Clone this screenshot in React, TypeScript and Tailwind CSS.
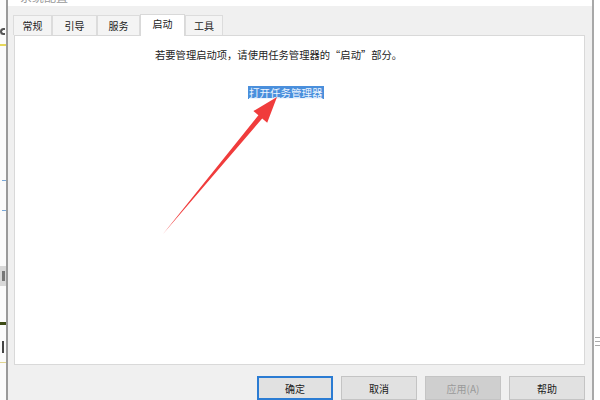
import React from 'react';

const tabs = [
  { label: '常规', w: 'w-[39px]' },
  { label: '引导', w: 'w-[45px]' },
  { label: '服务', w: 'w-[43px]' },
  { label: '启动', w: 'w-[45px]', active: true },
  { label: '工具', w: 'w-[38px]' },
];

const font = { fontFamily: '"Noto Sans CJK SC", "Microsoft YaHei", sans-serif' };

export default function App() {
  return (
    <div className="relative w-[600px] h-[400px] flex overflow-hidden bg-white text-[#1a1a1a]" style={font}>
      {/* edge of the window behind */}
      <div className="w-[6px] h-full flex flex-col bg-[#fbfbfb]">
        <div className="h-[28px]" />
        <div className="h-[7px] w-[5px] border-2 border-r-0 border-[#555] rounded-l-full" />
        <div className="h-[9px]" />
        <div className="h-[2px] bg-[#e6d85a]" />
        <div className="h-[134px]" />
        <div className="h-[1px] ml-[2px] bg-[#7aa8d8]" />
        <div className="h-[29px]" />
        <div className="h-[1px] ml-[2px] bg-[#7aa8d8]" />
        <div className="h-[55px]" />
        <div className="h-[20px] bg-[#d8d8d8] flex items-center">
          <div className="h-[10px] w-[3px] ml-[2px] bg-[#777]" />
        </div>
        <div className="h-[36px]" />
        <div className="h-[3px] bg-[#3c4a14]" />
        <div className="h-[16px]" />
        <div className="h-[12px] w-[3px] ml-[2px] border-l-2 border-[#444]" />
        <div className="h-[9px]" />
        <div className="h-[1px] bg-[#e2d690]" />
      </div>
      <div className="w-[2px] h-full bg-[#9a9a9a]" />

      {/* dialog */}
      <div className="w-[584px] h-full flex flex-col">
        <div className="h-[8px] bg-white overflow-hidden pl-[12px]">
          <div className="text-[12px] leading-[12px] -mt-[9px] text-[#9a9a9a]">系统配置</div>
        </div>
        <div className="flex-1 bg-[#f0f0f0] flex flex-col">
          <div className="flex items-end h-[29px] pl-[5px]">
            {tabs.map((t) =>
              t.active ? (
                <div
                  key={t.label}
                  className={`${t.w} h-[22px] -mb-[1px] relative z-10 bg-white border border-b-0 border-[#d9d9d9] flex items-start justify-center pt-[3px] text-[10px] leading-[12px]`}
                >
                  {t.label}
                </div>
              ) : (
                <div
                  key={t.label}
                  className={`${t.w} h-[20px] bg-[#f4f4f4] border border-b-0 border-[#dcdcdc] flex items-center justify-center text-[10px] leading-[12px] text-[#222]`}
                >
                  {t.label}
                </div>
              )
            )}
          </div>
          <div className="ml-[6px] mr-[7px] h-[330px] bg-white border border-[#d9d9d9] flex flex-col">
            <div className="pl-[140px] pt-[12px] text-[10.3px] leading-[13px] text-[#222]">
              若要管理启动项，请使用任务管理器的“启动”部分。
            </div>
            <div className="pl-[233px] pt-[17px]">
              <span className="inline-block bg-[#4a8fdc] text-[#eef5ff] text-[10.5px] leading-[13px] px-[1px] underline">
                打开任务管理器
              </span>
            </div>
          </div>
          <div className="flex justify-end gap-[8px] pr-[7px] mt-[11px]">
            <div className="w-[76px] h-[24px] bg-[#e1e1e1] border-2 border-[#2b7cd3] flex items-center justify-center text-[10px]">确定</div>
            <div className="w-[76px] h-[24px] bg-[#e1e1e1] border border-[#c4c4c4] flex items-center justify-center text-[10px]">取消</div>
            <div className="w-[76px] h-[24px] bg-[#cfcfcf] border border-[#c4c4c4] flex items-center justify-center text-[10px] text-[#9a9a9a]">应用(A)</div>
            <div className="w-[76px] h-[24px] bg-[#e1e1e1] border border-[#c4c4c4] flex items-center justify-center text-[10px]">帮助</div>
          </div>
        </div>
      </div>
      <div className="w-[2px] h-full bg-[#a8a8a8]" />
      <div className="w-[6px] h-full bg-white flex flex-col pl-[1px]">
        <div className="h-[337px]" />
        <div className="h-[1px] bg-[#aaa]" />
        <div className="h-[3px]" />
        <div className="h-[1px] bg-[#aaa]" />
        <div className="h-[3px]" />
        <div className="h-[1px] bg-[#aaa]" />
      </div>

      {/* red annotation arrow */}
      <svg className="absolute left-0 top-0 pointer-events-none" width="600" height="400" viewBox="0 0 600 400">
        <polygon
          points="163,234 258.4,115.3 253.4,111.1 277,97 267.2,122.7 262.2,118.5"
          fill="#f03c3c"
        />
      </svg>
    </div>
  );
}
